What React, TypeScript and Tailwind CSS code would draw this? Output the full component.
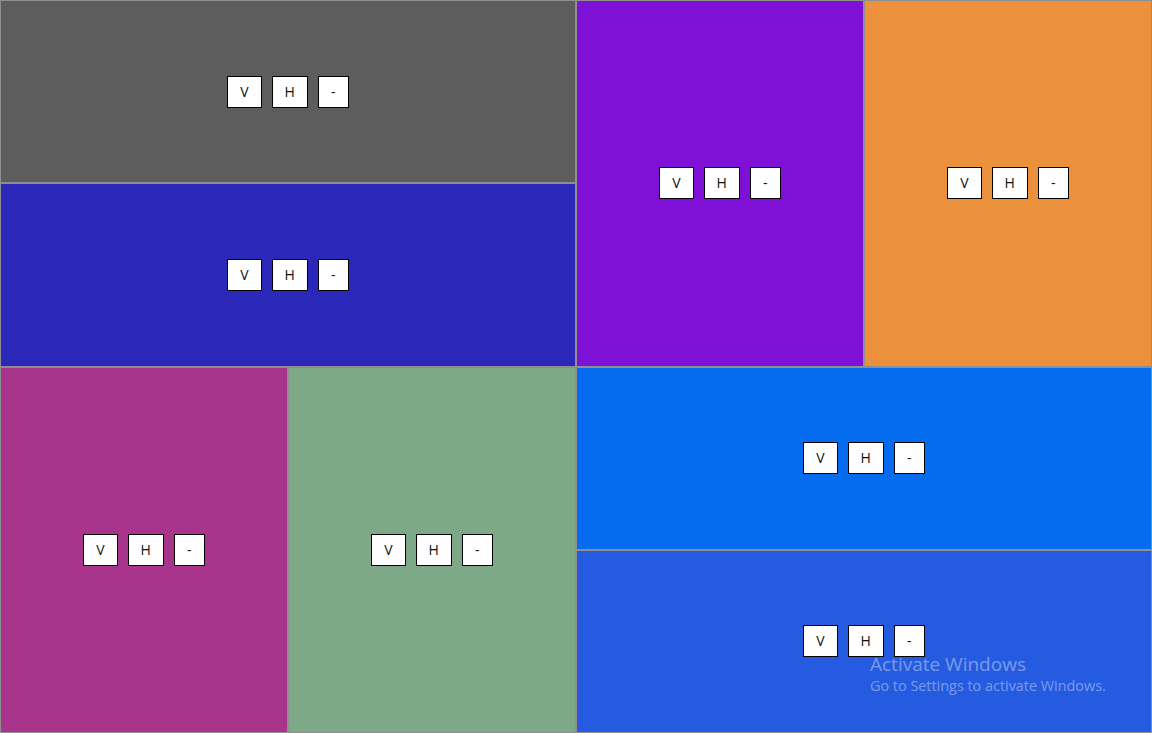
type Leaf = { color: string };

function Controls() {
  return (
    <div className="flex items-center gap-2.5">
      {["V", "H", "-"].map((l) => (
        <button
          key={l}
          className="flex h-8 min-w-[31px] items-center justify-center border border-black bg-white px-3 text-[14px] leading-none text-[#111]"
        >
          {l}
        </button>
      ))}
    </div>
  );
}

function Pane({ color }: Leaf) {
  return (
    <div className={`flex flex-1 items-center justify-center border border-[#8f8f8f] ${color}`}>
      <Controls />
    </div>
  );
}

export default function App() {
  return (
    <div
      className="relative grid h-[733px] w-[1152px] grid-cols-2 grid-rows-2 overflow-hidden"
      style={{ fontFamily: '"Open Sans", "Liberation Sans", sans-serif' }}
    >
      <div className="flex flex-col">
        <Pane color="bg-[#5d5d5d]" />
        <Pane color="bg-[#2a27b9]" />
      </div>
      <div className="flex flex-row">
        <Pane color="bg-[#7f10d6]" />
        <Pane color="bg-[#eb913e]" />
      </div>
      <div className="flex flex-row">
        <Pane color="bg-[#a8348c]" />
        <Pane color="bg-[#7ea988]" />
      </div>
      <div className="flex flex-col">
        <Pane color="bg-[#056cf0]" />
        <Pane color="bg-[#255be0]" />
      </div>

      <div className="pointer-events-none absolute left-[870px] top-[652px] text-white/40">
        <div className="text-[19px] leading-6">Activate Windows</div>
        <div className="text-[14.4px] leading-5">Go to Settings to activate Windows.</div>
      </div>
    </div>
  );
}
